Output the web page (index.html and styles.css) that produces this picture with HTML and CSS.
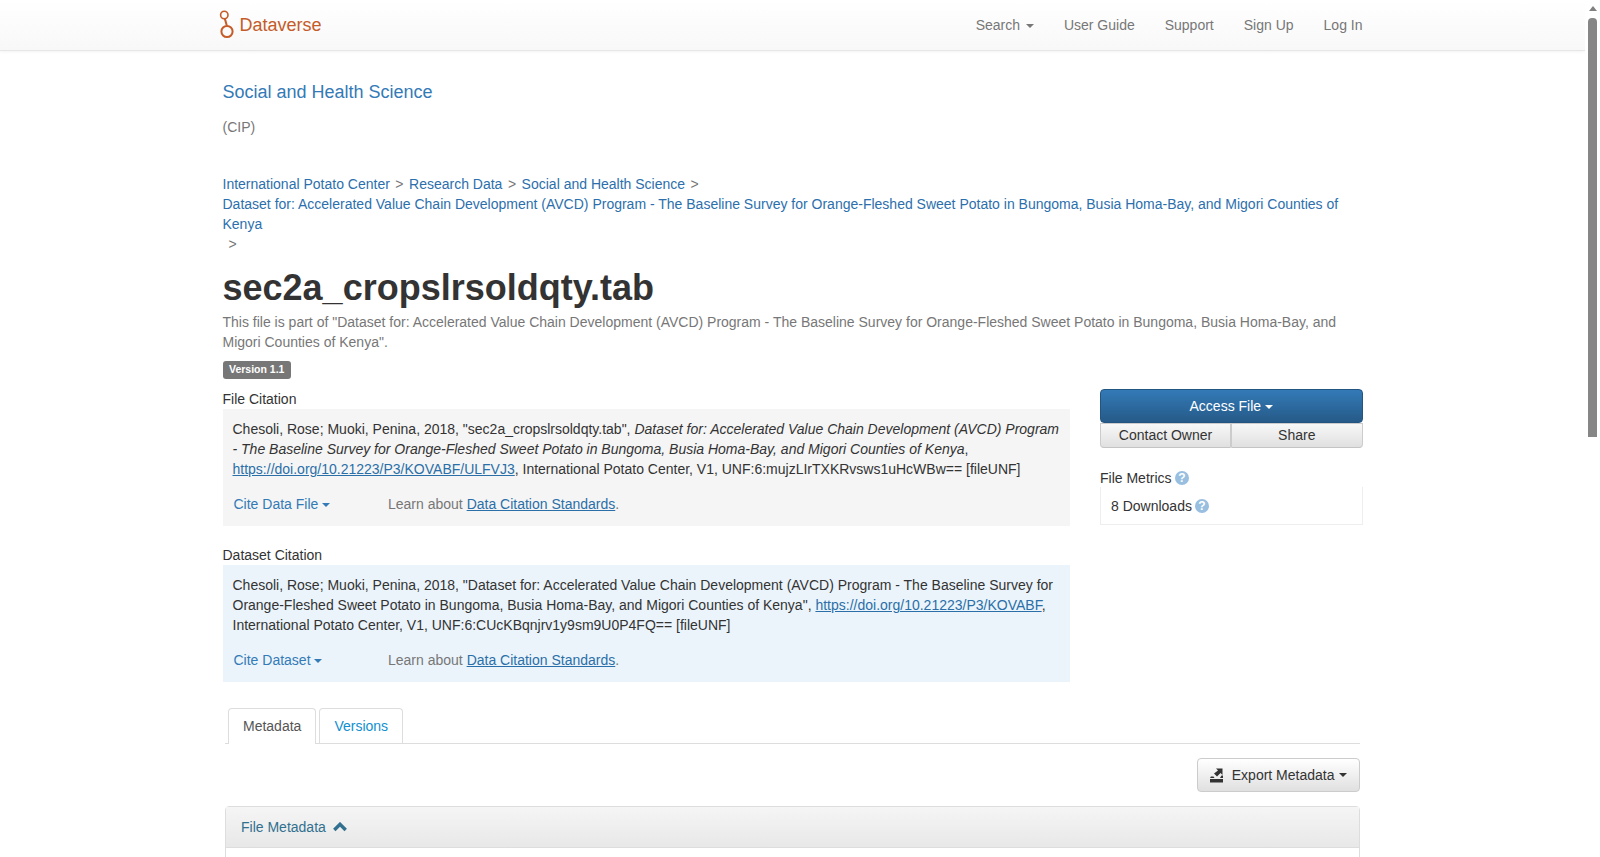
FILE: index.html
```html
<!DOCTYPE html>
<html lang="en">
<head>
<meta charset="utf-8">
<title>sec2a_cropslrsoldqty.tab</title>
<link rel="stylesheet" href="styles.css">
</head>
<body>
<div class="page">
<nav class="navbar">
  <div class="container nav-inner">
    <a class="brand" href="#">
      <svg class="logo" width="16" height="30" viewBox="0 0 16 30" aria-hidden="true">
        <circle cx="5.3" cy="5" r="3.7" fill="none" stroke="#c55b28" stroke-width="1.6"/>
        <path d="M5.8 8.6 L7.8 15.5" stroke="#c55b28" stroke-width="2" fill="none"/>
        <circle cx="8" cy="21.5" r="5.6" fill="none" stroke="#c55b28" stroke-width="2"/>
      </svg>
      <span>Dataverse</span>
    </a>
    <ul class="nav-links">
      <li><a href="#">Search <span class="caret"></span></a></li>
      <li><a href="#">User Guide</a></li>
      <li><a href="#">Support</a></li>
      <li><a href="#">Sign Up</a></li>
      <li><a href="#">Log In</a></li>
    </ul>
  </div>
</nav>

<main class="container">
  <header class="dv-head">
    <a class="dv-name" href="#">Social and Health Science</a>
    <p class="dv-aff">(CIP)</p>
  </header>

  <div class="crumbs">
    <a href="#">International Potato Center</a><span class="sep">&gt;</span><a href="#">Research Data</a><span class="sep">&gt;</span><a href="#">Social and Health Science</a><span class="sep">&gt;</span><br>
    <a href="#">Dataset for: Accelerated Value Chain Development (AVCD) Program - The Baseline Survey for Orange-Fleshed Sweet Potato in Bungoma, Busia Homa-Bay, and Migori Counties of Kenya</a><br>
    <span class="sep">&gt;</span>
  </div>

  <h1>sec2a_cropslrsoldqty.tab</h1>
  <p class="part-of">This file is part of "Dataset for: Accelerated Value Chain Development (AVCD) Program - The Baseline Survey for Orange-Fleshed Sweet Potato in Bungoma, Busia Homa-Bay, and Migori Counties of Kenya".</p>
  <div class="version-row"><span class="label">Version 1.1</span></div>

  <div class="columns">
    <div class="col-main">
      <div class="cite-title">File Citation</div>
      <div class="cite-box cite-file">
        <div class="cite-text">Chesoli, Rose; Muoki, Penina, 2018, "sec2a_cropslrsoldqty.tab", <em>Dataset for: Accelerated Value Chain Development (AVCD) Program - The Baseline Survey for Orange-Fleshed Sweet Potato in Bungoma, Busia Homa-Bay, and Migori Counties of Kenya</em>, <a class="ul" href="#">https://doi.org/10.21223/P3/KOVABF/ULFVJ3</a>, International Potato Center, V1, UNF:6:mujzLIrTXKRvsws1uHcWBw== [fileUNF]</div>
        <div class="cite-foot">
          <a class="cite-drop" href="#">Cite Data File <span class="caret"></span></a>
          <span class="learn">Learn about <a class="ul" href="#">Data Citation Standards</a>.</span>
        </div>
      </div>
      <div class="cite-title second">Dataset Citation</div>
      <div class="cite-box cite-ds">
        <div class="cite-text">Chesoli, Rose; Muoki, Penina, 2018, "Dataset for: Accelerated Value Chain Development (AVCD) Program - The Baseline Survey for Orange-Fleshed Sweet Potato in Bungoma, Busia Homa-Bay, and Migori Counties of Kenya", <a class="ul" href="#">https://doi.org/10.21223/P3/KOVABF</a>, International Potato Center, V1, UNF:6:CUcKBqnjrv1y9sm9U0P4FQ== [fileUNF]</div>
        <div class="cite-foot">
          <a class="cite-drop" href="#">Cite Dataset <span class="caret"></span></a>
          <span class="learn">Learn about <a class="ul" href="#">Data Citation Standards</a>.</span>
        </div>
      </div>
    </div>
    <aside class="col-side">
      <a class="btn-access" href="#">Access File <span class="caret"></span></a>
      <div class="btn-pair">
        <a class="btn-small" href="#">Contact Owner</a>
        <a class="btn-small" href="#">Share</a>
      </div>
      <div class="metrics-title">File Metrics
        <svg class="q" width="14" height="14" viewBox="0 0 14 14" aria-hidden="true"><circle cx="7" cy="7" r="7" fill="#99bfe0"/><text x="7" y="11.300" text-anchor="middle" class="q-mark">?</text></svg>
      </div>
      <div class="metrics-box">8 Downloads
        <svg class="q" width="14" height="14" viewBox="0 0 14 14" aria-hidden="true"><circle cx="7" cy="7" r="7" fill="#99bfe0"/><text x="7" y="11.300" text-anchor="middle" class="q-mark">?</text></svg>
      </div>
    </aside>
  </div>

  <section class="tabs-wrap">
    <ul class="tabs">
      <li class="tab active"><a href="#">Metadata</a></li>
      <li class="tab"><a href="#">Versions</a></li>
    </ul>
    <div class="tab-tools">
      <a class="btn-export" href="#">
        <svg width="14" height="15" viewBox="0 0 14 15" aria-hidden="true"><path d="M0 11h13v3.500H0z M6 0.500h6.500V7L10.500 5 7 8.500 4 5.500 8 2.500z M1 8.500h2.500l1 1.500H0z M11.500 7.500h1.500V10h-3z" fill="#333"/></svg>
        <span class="exp-label">Export Metadata</span> <span class="caret"></span>
      </a>
    </div>
    <div class="panel">
      <div class="panel-head">
        <a href="#">File Metadata</a>
        <svg class="chev" width="14" height="10" viewBox="0 0 14 10" aria-hidden="true"><path d="M1.300 8 7 2.300 12.700 8" fill="none" stroke="#31708f" stroke-width="3.400"/></svg>
      </div>
      <div class="panel-body"></div>
    </div>
  </section>
</main>
</div>
<div class="scrollbar" aria-hidden="true">
  <div class="sb-arrow"></div>
  <div class="sb-thumb"></div>
</div>
</body>
</html>
```
FILE: styles.css
```css
* { box-sizing: border-box; }
html, body { height: 100%; overflow: hidden; }
body {
  margin: 0;
  font-family: "Liberation Sans", Arial, sans-serif;
  font-size: 14px;
  line-height: 20px;
  color: #333;
  background: #fff;
}
.page { margin-right: 15px; height: 100%; overflow: hidden; }
a { color: #337ab7; text-decoration: none; }
.ul { text-decoration: underline; color: #2a6fa8; }
.container { width: 1170px; margin: 0 auto; padding: 0 15px; }

.scrollbar {
  position: fixed; top: 0; right: 0; bottom: 0; width: 15px; background: #fff;
  display: flex; flex-direction: column; align-items: center;
}
.sb-arrow {
  margin-top: 6px; width: 0; height: 0;
  border-left: 4.5px solid transparent; border-right: 4.5px solid transparent; border-bottom: 5px solid #808080;
}
.sb-thumb { margin-top: 7px; width: 9px; height: 419px; background: #868686; border-radius: 4px 4px 0 0; }

.navbar {
  height: 51px;
  background: linear-gradient(to bottom, #fff 0, #f8f8f8 100%);
  border-bottom: 1px solid #e7e7e7;
  box-shadow: 0 1px 3px rgba(0,0,0,.05);
}
.nav-inner { display: flex; justify-content: space-between; align-items: center; height: 50px; }
.brand { display: flex; align-items: center; color: #c55b28; font-size: 18px; }
.logo { margin: 0 5px 0 -4px; flex: none; }
.nav-links { display: flex; list-style: none; margin: 0 0 0 auto; padding: 0; }
.nav-links li { margin-left: 30px; }
.nav-links a { color: #777; }
.caret {
  display: inline-block; width: 0; height: 0; margin-left: 2px; vertical-align: middle;
  border-top: 4px solid; border-right: 4px solid transparent; border-left: 4px solid transparent;
}

.dv-head { padding-top: 31px; }
.dv-name { font-size: 18px; display: block; line-height: 20px; color: #337ab7; }
.dv-aff { margin: 15px 0 0; color: #777; }

.crumbs { margin-top: 37px; color: #777; }
.crumbs a { color: #2c6fad; }
.sep { margin: 0 5.5px; }
.crumbs > .sep:last-child { margin-left: 6px; }

h1 { font-size: 36px; font-weight: 700; line-height: 40px; margin: 14px 0 4px; color: #333; }
.part-of { margin: 0; color: #777; }
.version-row { margin-top: 9px; height: 18px; display: flex; }
.label {
  background: #777; color: #fff; font-size: 10.5px; font-weight: 700; height: 18px;
  line-height: 17px; padding: 0 6.5px; border-radius: 3px; display: inline-block;
}

.columns { display: flex; justify-content: space-between; margin-top: 10px; }
.col-main { width: 847.5px; }
.col-side { width: 262.5px; }
.cite-title { line-height: 20px; }
.cite-title.second { margin-top: 19px; }
.cite-box { padding: 10px 10px 11px 10px; height: 117px; }
.cite-file { background: #f5f5f5; }
.cite-ds { background: #ebf4fb; }
.cite-foot { display: flex; margin-top: 15px; }
.cite-drop { width: 155.5px; padding-left: 1px; color: #337ab7; }
.cite-drop .caret { margin-left: 0; }
.learn { color: #777; }

.btn-access {
  display: block; height: 34px; line-height: 32px; text-align: center; color: #fff;
  background: linear-gradient(to bottom, #337ab7 0, #265a88 100%);
  border: 1px solid #245580; border-radius: 4px;
}
.btn-access .caret { margin-left: 0; }
.btn-pair { display: flex; height: 25px; }
.btn-small {
  flex: 1; text-align: center; line-height: 22px; color: #333;
  background: linear-gradient(to bottom, #f8f8f8 0, #e0e0e0 100%);
  border: 1px solid #ccc; border-bottom-color: #c4c4c4;
}
.btn-small:first-child { border-radius: 0 0 0 4px; flex: 0 0 131px; }
.btn-small:last-child { border-radius: 0 0 4px 0; }
.metrics-title { margin-top: 20px; line-height: 20px; display: flex; align-items: center; gap: 3.5px; }
.metrics-box {
  margin-top: -1px; height: 38px; padding: 0 10px; line-height: 36px; display: flex; align-items: center; gap: 3.5px;
  border: 1px solid #eee; border-top: 0;
}
.q { flex: none; }
.q-mark { font: 700 12px "Liberation Sans", Arial, sans-serif; fill: #fff; }

.tabs-wrap { padding: 0 3px 0 2.5px; }
.tabs { display: flex; list-style: none; margin: 26px 0 0; padding: 0 0 0 3px; border-bottom: 1px solid #ddd; height: 36px; }
.tab { margin-right: 3px; height: 36px; }
.tab a {
  display: block; height: 36px; padding: 7px 14px; border: 1px solid #ddd; border-bottom: 0;
  border-radius: 4px 4px 0 0; color: #1090d0;
}
.tab.active a { color: #555; background: #fff; }
.tab-tools { display: flex; justify-content: flex-end; margin-top: 14px; }
.btn-export {
  display: flex; align-items: center; height: 34px; padding: 0 12px; color: #333;
  background: linear-gradient(to bottom, #fff 0, #e0e0e0 100%);
  border: 1px solid #ccc; border-radius: 4px;
}
.exp-label { margin-left: 8px; margin-right: 2px; }
.panel { margin-top: 14px; border: 1px solid #ddd; border-radius: 4px; }
.panel-head {
  height: 41px; padding: 0 15px; display: flex; align-items: center; gap: 7px;
  background: linear-gradient(to bottom, #f5f5f5 0, #e8e8e8 100%);
  border-bottom: 1px solid #ddd;
}
.panel-head a { color: #31708f; }
.panel-body { padding: 15px; height: 40px; }
```
